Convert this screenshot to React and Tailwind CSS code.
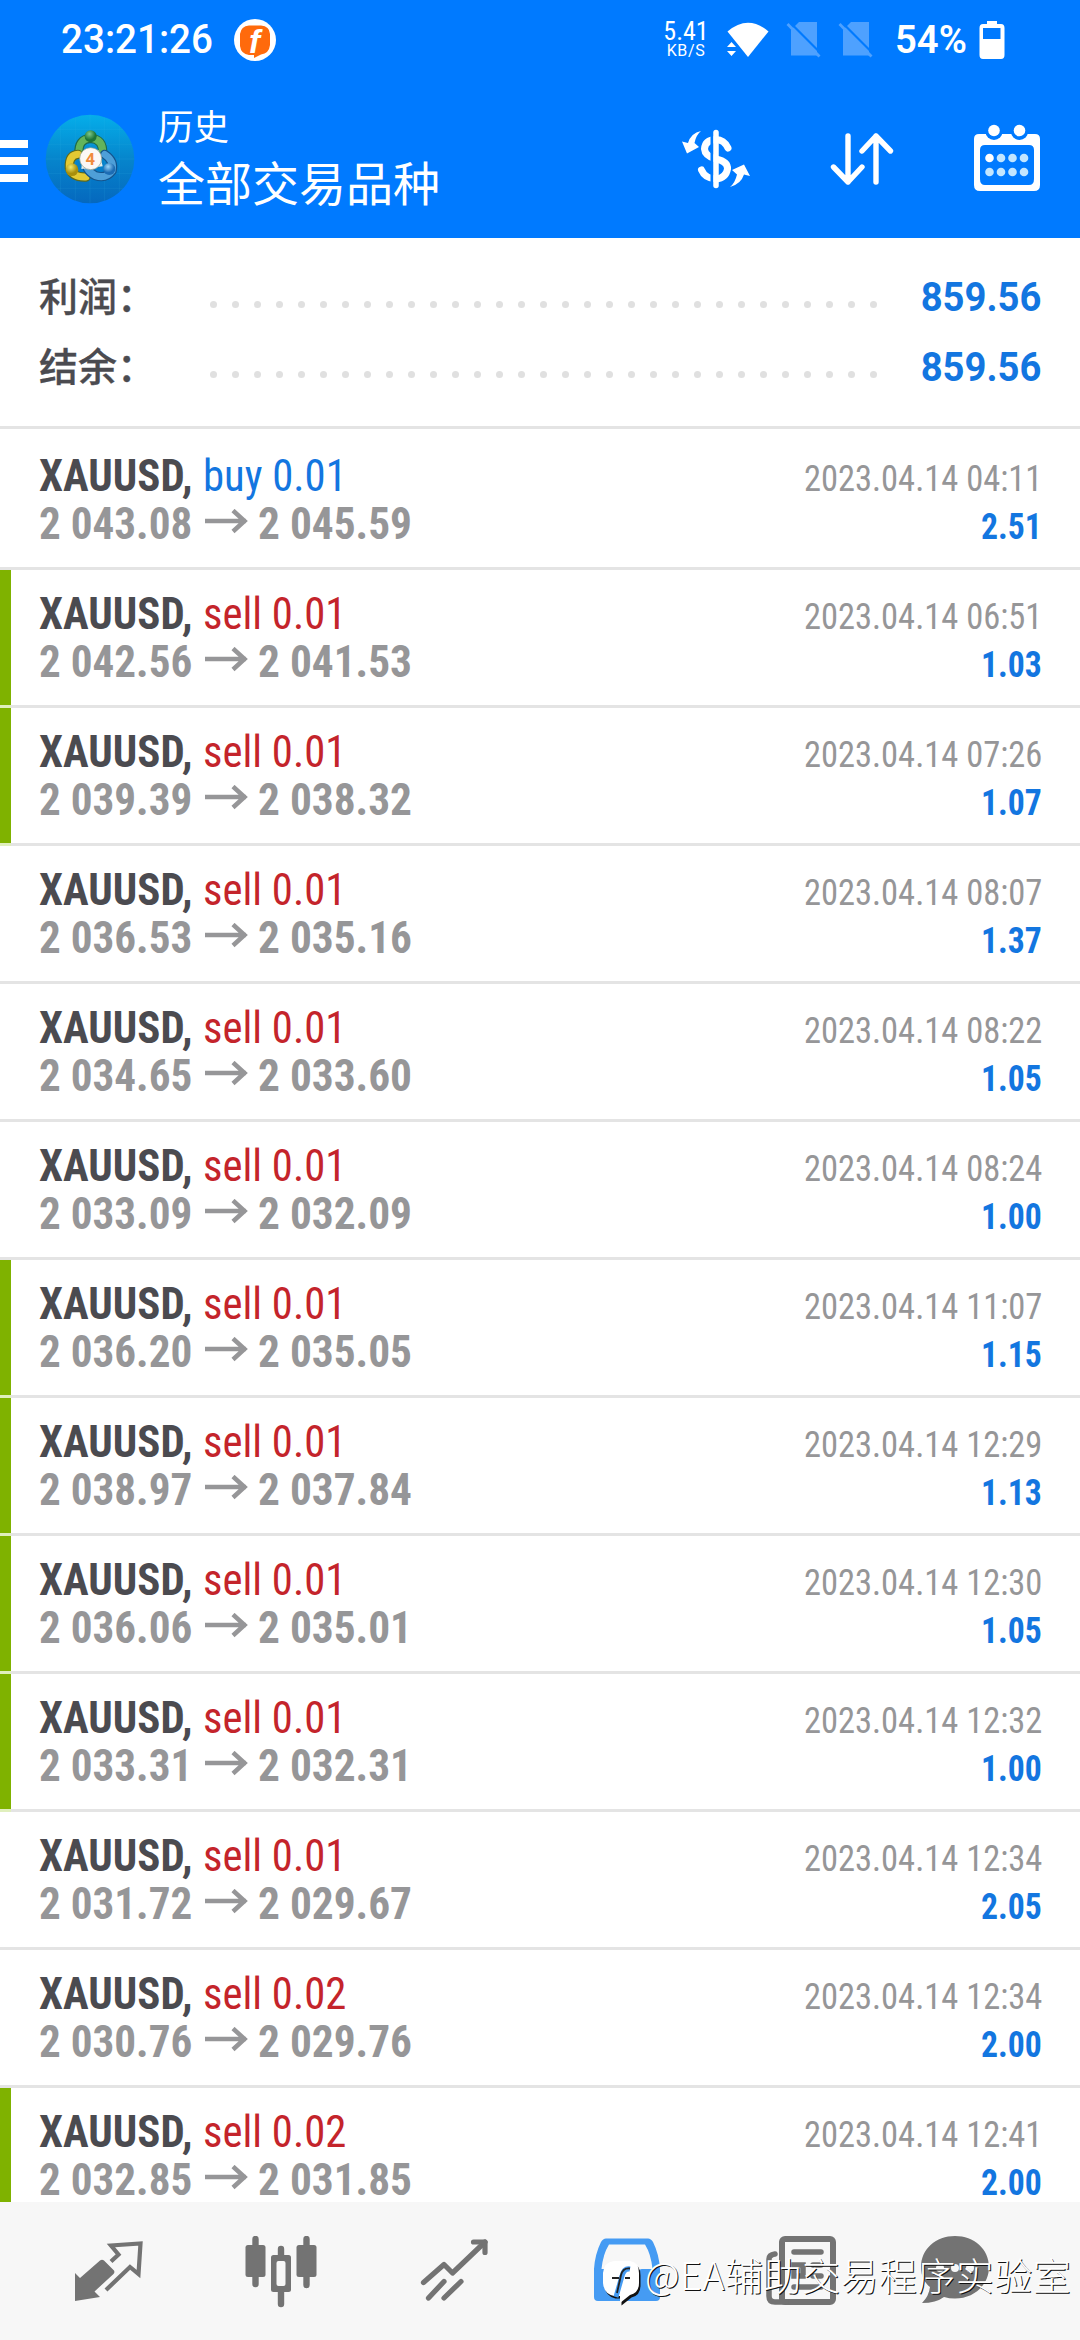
import React from "react";

const deals = [
  ["buy", "0.01", "2 043.08", "2 045.59", "04:11", "2.51", false],
  ["sell", "0.01", "2 042.56", "2 041.53", "06:51", "1.03", true],
  ["sell", "0.01", "2 039.39", "2 038.32", "07:26", "1.07", true],
  ["sell", "0.01", "2 036.53", "2 035.16", "08:07", "1.37", false],
  ["sell", "0.01", "2 034.65", "2 033.60", "08:22", "1.05", false],
  ["sell", "0.01", "2 033.09", "2 032.09", "08:24", "1.00", false],
  ["sell", "0.01", "2 036.20", "2 035.05", "11:07", "1.15", true],
  ["sell", "0.01", "2 038.97", "2 037.84", "12:29", "1.13", true],
  ["sell", "0.01", "2 036.06", "2 035.01", "12:30", "1.05", true],
  ["sell", "0.01", "2 033.31", "2 032.31", "12:32", "1.00", true],
  ["sell", "0.01", "2 031.72", "2 029.67", "12:34", "2.05", false],
  ["sell", "0.02", "2 030.76", "2 029.76", "12:34", "2.00", false],
  ["sell", "0.02", "2 032.85", "2 031.85", "12:41", "2.00", true],
];

function AppBadge() {
  return (
    <svg className="ml-[21px] h-[42px] w-[42px] shrink-0" viewBox="0 0 42 42">
      <circle cx="21" cy="21" r="21" fill="#fff" />
      <path d="M15 6.500H27Q35.500 7 36 15V26Q35 34.500 27 35.500L20 39V36H15Q7 35 6 27V15Q7 7 15 6.500Z" fill="#ff6a0c" />
      <text x="20.500" y="34" textAnchor="middle" fontFamily="Liberation Sans" fontWeight="700" fontStyle="italic" fontSize="33" fill="#fff">f</text>
    </svg>
  );
}

function SimOff({ className }) {
  return (
    <svg className={className} viewBox="0 0 36 38">
      <path d="M5 9L13 1H31V34.500H5Z" fill="#4ea1ff" />
      <path d="M3 0.500L36 33.500" stroke="#007aff" strokeWidth="2.200" />
      <path d="M1.500 3L33.500 35.500" stroke="#4ea1ff" strokeWidth="2.800" />
    </svg>
  );
}

function StatusBar() {
  return (
    <div className="flex h-20 items-center pl-[61px] font-['Roboto'] text-white">
      <div className="w-[152px]">
        <span className="inline-block origin-left scale-x-[0.965] text-[40px] leading-none font-medium">23:21:26</span>
      </div>
      <AppBadge />
      <div className="ml-[388px] flex w-[44px] flex-col items-center">
        <span className="font-['Roboto_Condensed'] text-[26px] leading-[20px]">5.41</span>
        <span className="pt-px text-[16px] leading-[17px] tracking-[0.600px]">KB/S</span>
      </div>
      <svg className="ml-[19px] h-[36px] w-[42px]" viewBox="0 0 42 36">
        <path d="M0.500 9.500Q21 -8 41.500 9.500L21 35Z" fill="#fff" />
        <path d="M0 25H9L4.500 20ZM0 29H9L4.500 34Z" fill="#fff" />
      </svg>
      <SimOff className="ml-[17px] h-[38px] w-[36px]" />
      <SimOff className="ml-[16px] h-[38px] w-[36px]" />
      <div className="ml-[21px] w-[73px]">
        <span className="inline-block origin-left scale-x-[0.98] text-[39px] leading-none font-semibold">54%</span>
      </div>
      <svg className="ml-[11px] h-[40px] w-[26px]" viewBox="0 0 26 40">
        <path d="M8 1H18V4H22Q25.500 4 25.500 8V35Q25.500 39 22 39H4Q0.500 39 0.500 35V8Q0.500 4 4 4H8Z" fill="#fff" />
        <rect x="4" y="8" width="17.500" height="11" fill="#007aff" />
      </svg>
    </div>
  );
}

function Avatar() {
  return (
    <svg className="ml-[17px] h-[90px] w-[90px]" viewBox="13 43 270 270">
      <defs>
        <linearGradient id="sky" x1="0" y1="0" x2="0" y2="1">
          <stop offset="0" stopColor="#05aeea" />
          <stop offset="0.500" stopColor="#0685cc" />
          <stop offset="1" stopColor="#0568be" />
        </linearGradient>
        <radialGradient id="gr" cx="0.400" cy="0.300"><stop offset="0" stopColor="#7fc98a" /><stop offset="1" stopColor="#1d7436" /></radialGradient>
        <radialGradient id="ye" cx="0.400" cy="0.300"><stop offset="0" stopColor="#f4ea6a" /><stop offset="1" stopColor="#a88e0c" /></radialGradient>
        <radialGradient id="bl" cx="0.400" cy="0.300"><stop offset="0" stopColor="#9ad6fa" /><stop offset="1" stopColor="#1c6cb4" /></radialGradient>
        <clipPath id="disc"><circle cx="148" cy="178" r="133" /></clipPath>
      </defs>
      <circle cx="148" cy="178" r="133" fill="url(#sky)" />
      <path clipPath="url(#disc)" d="M60 40V320M104 40V320M148 40V320M192 40V320M236 40V320M10 90H290M10 134H290M10 178H290M10 222H290M10 266H290" stroke="#3fb6e8" strokeOpacity="0.200" strokeWidth="2" />
      <g fill="none" strokeLinecap="round">
        <path d="M115 162Q112 118 150 116Q188 118 186 162" stroke="#1f6b4a" strokeWidth="28" />
        <path d="M115 162Q112 118 150 116Q188 118 186 162" stroke="#62b45c" strokeWidth="21" />
        <path d="M112 164Q84 166 86 204Q96 234 136 232" stroke="#5f6a1c" strokeWidth="28" />
        <path d="M112 164Q84 166 86 204Q96 234 136 232" stroke="#e3c933" strokeWidth="21" />
        <path d="M192 164Q222 184 214 214Q196 238 164 228Q148 220 140 206" stroke="#14538c" strokeWidth="28" />
        <path d="M192 164Q222 184 214 214Q196 238 164 228Q148 220 140 206" stroke="#4e9fd8" strokeWidth="21" />
      </g>
      <path d="M128 152L174 152L186 200L122 208Z" fill="#e7f0ee" />
      <circle cx="150" cy="110" r="18" fill="url(#gr)" />
      <circle cx="94" cy="210" r="19" fill="url(#ye)" />
      <circle cx="206" cy="208" r="18" fill="url(#bl)" />
      <circle cx="150" cy="177" r="33" fill="#fbf8f6" stroke="#8b9b86" strokeWidth="2" />
      <text x="149" y="195" textAnchor="middle" fontFamily="Roboto" fontWeight="700" fontSize="50" fill="#f08a3c">4</text>
    </svg>
  );
}

function Toolbar() {
  return (
    <div className="flex h-[158px] items-start">
      <div className="mt-[60px] flex w-7 flex-col gap-[9.500px]">
        <i className="h-[7.500px] bg-white" />
        <i className="h-[7.500px] bg-white" />
        <i className="h-[7.500px] bg-white" />
      </div>
      <div className="mt-[34px]"><Avatar /></div>
      <div className="ml-[23px] flex w-[523px] flex-col pt-[19px] font-['Noto_Sans_CJK_SC'] text-white">
        <span className="text-[35.500px] leading-[52px]">历史</span>
        <span className="text-[47px] leading-[60px]">全部交易品种</span>
      </div>
      <svg className="mt-[48px] h-[62px] w-[70px]" viewBox="0 0 70 62" fill="none" stroke="#fff">
        <path d="M47 20Q43 11.500 35 11.500Q24 12 23.500 21Q24 28 35 31Q47 33.500 46.500 41Q45 50 35 51Q24 50.500 20.500 42" strokeWidth="7" strokeLinecap="round" />
        <path d="M31 4V58" stroke="#007aff" strokeWidth="3" />
        <path d="M35 4.500V57.500" strokeWidth="5.500" strokeLinecap="round" />
        <path d="M20 3Q15 7 13.500 15L18 19L6 25.500L1 13.500L7 15Q10 5 20 3Z" fill="#fff" stroke="none" />
        <path d="M49 59Q54 55 56 46.500L51 42L63 36.500L69 48L63 46.500Q60 56 49 59Z" fill="#fff" stroke="none" />
      </svg>
      <svg className="ml-[78px] mt-[50px] h-[58px] w-[66px]" viewBox="0 0 66 58" fill="none" stroke="#fff" strokeWidth="5.400" strokeLinecap="round" strokeLinejoin="round">
        <path d="M19 6V52M4.500 37L19 52L33 37" />
        <path d="M47 52V6M33 21L47 6L61.500 21" />
      </svg>
      <svg className="ml-[78px] mt-[44px] h-[70px] w-[68px]" viewBox="0 0 68 70">
        <path fillRule="evenodd" d="M6 10H62Q67 10 67 15V61Q67 67 61 67H7Q1 67 1 61V15Q1 10 6 10ZM12 21Q7 21 7 26V55Q7 61 12 61H56Q61 61 61 55V26Q61 21 56 21Z" fill="#fff" />
        <g fill="#007aff"><circle cx="21" cy="7.500" r="8.500" /><circle cx="46.500" cy="7.500" r="8.500" /></g>
        <g fill="#fff"><circle cx="21" cy="6.500" r="5.800" /><circle cx="46.500" cy="6.500" r="5.800" /></g>
        <g fill="#c3e6ff">
          <circle cx="16.500" cy="34" r="4.300" fill="#fff" /><circle cx="28" cy="34" r="4.300" /><circle cx="39.500" cy="34" r="4.300" /><circle cx="51" cy="34" r="4.300" />
          <circle cx="16.500" cy="48" r="4.300" /><circle cx="28" cy="48" r="4.300" /><circle cx="39.500" cy="48" r="4.300" /><circle cx="51" cy="48" r="4.300" />
        </g>
      </svg>
    </div>
  );
}

function SummaryLine({ label, value }) {
  return (
    <div className="flex h-[70px] items-center pr-[39px] pl-[39px]">
      <span className="-mt-[6px] w-[171px] font-['Noto_Sans_CJK_SC'] text-[39px] leading-[70px] font-medium text-[#4b4b50] [-webkit-text-stroke:0.300px_#4b4b50]">{label}</span>
      <div className="mt-[15px] flex gap-[15px]">
        {Array.from({ length: 31 }, (_, i) => <i key={i} className="size-[7px] rounded-full bg-[#e0e0e0]" />)}
      </div>
      <span className="mt-[2px] ml-auto origin-right scale-x-[0.955] font-['Roboto'] text-[40px] leading-[70px] font-bold text-[#1376e0]">{value}</span>
    </div>
  );
}

function DealRow({ deal, first }) {
  const [side, lots, open, close, time, profit, marked] = deal;
  return (
    <div className={first ? "flex h-[141px] shrink-0 pt-[3px]" : "flex h-[138px] shrink-0"}>
      <div className="w-[11px]">
        {marked && <><div className="h-[135px] bg-[#7fb200]" /><div className="h-[3px] bg-[#e0efbd]" /></>}
        {!marked && <div className="mt-[135px] h-[3px] bg-[#e4e4e4]" />}
      </div>
      <div className="flex flex-1 flex-col border-b-[3px] border-[#e4e4e4] pt-5 pr-[38px] pl-7 font-['Roboto_Condensed']">
        <div className="flex h-12 items-baseline justify-between leading-[48px]">
          <div className="flex text-[44px]">
            <div className="w-[164px]"><span className="inline-block origin-left scale-x-[0.975] font-bold text-[#4b4b50]">XAUUSD,</span></div>
            <span className={side === "buy" ? "origin-left scale-x-[0.97] text-[#1376e0]" : "origin-left scale-x-[0.97] text-[#c4242b]"}>{side} {lots}</span>
          </div>
          <span className="origin-right scale-x-[0.945] text-[36.500px] text-[#969698]">2023.04.14 {time}</span>
        </div>
        <div className="flex h-12 items-baseline justify-between leading-[48px] font-bold">
          <div className="flex items-baseline text-[44px] text-[#969698]">
            <div className="w-[166px]"><span className="inline-block origin-left scale-x-[0.98]">{open}</span></div>
            <svg className="h-[30px] w-[43px]" viewBox="0 0 43 30" fill="none" stroke="#969698" strokeWidth="4.500"><path d="M0 12H41M28 1.500L39.500 12L28 22.500" /></svg>
            <span className="ml-[10px] origin-left scale-x-[0.985]">{close}</span>
          </div>
          <span className="origin-right scale-x-[0.91] text-[37px] text-[#1376e0]">{profit}</span>
        </div>
      </div>
    </div>
  );
}

function BottomNav() {
  return (
    <div className="relative flex h-[138px] shrink-0 items-start bg-[#f7f7f7] pt-[34px]">
      <svg className="ml-[74px] h-[70px] w-[70px]" viewBox="0 0 70 70">
        <path d="M1 37L6 42L26 24.500Q28 23 30 24.500L40 34.500Q41 36.500 39.500 38L20.500 55.500L26 61L1 65Z" fill="#737373" />
        <path d="M37 25.500L44.500 18.500L37 9.500L66.500 7.500L64.500 38L56 31L32 54" fill="none" stroke="#737373" strokeWidth="4.200" />
      </svg>
      <svg className="ml-[101px] h-[72px] w-[72px]" viewBox="0 0 72 72" fill="#737373">
        <path d="M10.500 3V48M61.500 3V49M36 13V68" stroke="#737373" strokeWidth="6.400" strokeLinecap="round" />
        <rect x="0.500" y="9" width="20" height="32" rx="2.500" /><rect x="51.500" y="9" width="20" height="32" rx="2.500" />
        <rect x="26" y="19" width="20" height="37" rx="2.500" /><rect x="31.500" y="25" width="9" height="25" rx="2" fill="#f7f7f7" />
      </svg>
      <svg className="ml-[103px] h-[70px] w-[70px]" viewBox="0 0 70 70" fill="none" stroke="#737373" strokeWidth="5.200" strokeLinecap="round" strokeLinejoin="round">
        <path d="M3.500 46.500L24 28.500L32.500 37L65 6" /><path d="M53.500 6H65V16.500" /><path d="M8.500 62L24 45.500M24 62L41 45.500" />
      </svg>
      <svg className="ml-[103px] h-[70px] w-[68px]" viewBox="0 0 68 70">
        <path fillRule="evenodd" d="M13 2.500H55Q58 2.500 60 6Q66 18 67 33V61Q67 65 63 65H5Q1 65 1 61V33Q2 18 8 6Q10 2.500 13 2.500ZM16 8.500Q10 18 8.500 33H19Q22 33 24 38Q28 44 34 44Q40 44 44 38Q46 33 49 33H59.500Q58 18 52 8.500Z" fill="#459bf3" />
      </svg>
      <svg className="ml-[105px] h-[70px] w-[70px]" viewBox="0 0 70 70" fill="none" stroke="#737373" strokeWidth="5.500" strokeLinecap="round">
        <rect x="16" y="3" width="51" height="63" rx="3" strokeWidth="6" />
        <path d="M9 18Q3 19 3 23V60Q3 66 9 66H20" />
        <path d="M28 16H55" /><path d="M47 29H55M47 40H55M28 51H55" /><rect x="28" y="29" width="9" height="11" />
      </svg>
      <svg className="ml-[84px] h-[70px] w-[70px]" viewBox="0 0 70 70" fill="#737373">
        <path d="M35 0C16 0 1 13 1 31C1 41 5 47 10 51Q9 60 2 67Q16 67 24 61Q29 62.500 35 62.500C54 62.500 69 49 69 31C69 13 54 0 35 0Z" />
        <g fill="#f7f7f7"><circle cx="20" cy="32" r="4" /><circle cx="35" cy="32" r="4" /><circle cx="50" cy="32" r="4" /></g>
      </svg>
      <div className="absolute top-[51px] left-[602px] flex items-start">
        <svg className="mt-[7px] h-[46px] w-[42px]" viewBox="0 0 42 46">
          <path d="M12 2H28Q37 3 37 14V24Q37 34 28 36L18 44V37H12Q2 35 1 24V14Q2 3 12 2Z" fill="#111" transform="translate(1.500 1.500)" />
          <path d="M12 1H28Q37 2 37 13V23Q37 33 28 35L18 43V36H12Q2 34 1 23V13Q2 2 12 1Z" fill="#fff" />
          <path d="M14 37L20 16Q22 8 28 9" fill="none" stroke="#459bf3" strokeWidth="5" />
          <path d="M15 33L19 15Q21 7.500 28 8.500M10 18H17M23 18H28" fill="none" stroke="#222" strokeWidth="1.800" />
        </svg>
        <span className="ml-px font-['Noto_Sans_CJK_SC'] text-[38px] leading-[42px] font-light tracking-[0.450px] whitespace-nowrap text-white [text-shadow:1px_1px_0.500px_#111]">@EA辅助交易程序实验室</span>
      </div>
    </div>
  );
}

export default function App() {
  return (
    <div className="flex h-[2340px] w-[1080px] flex-col overflow-hidden bg-white">
      <header className="h-[238px] shrink-0 bg-[#007aff]">
        <StatusBar />
        <Toolbar />
      </header>
      <section className="h-[191px] shrink-0 border-b-[3px] border-[#e4e4e4] pt-6">
        <SummaryLine label="利润：" value="859.56" />
        <SummaryLine label="结余：" value="859.56" />
      </section>
      <main className="flex h-[1773px] shrink-0 flex-col overflow-hidden">
        {deals.map((d, i) => <DealRow key={i} deal={d} first={i === 0} />)}
      </main>
      <BottomNav />
    </div>
  );
}
